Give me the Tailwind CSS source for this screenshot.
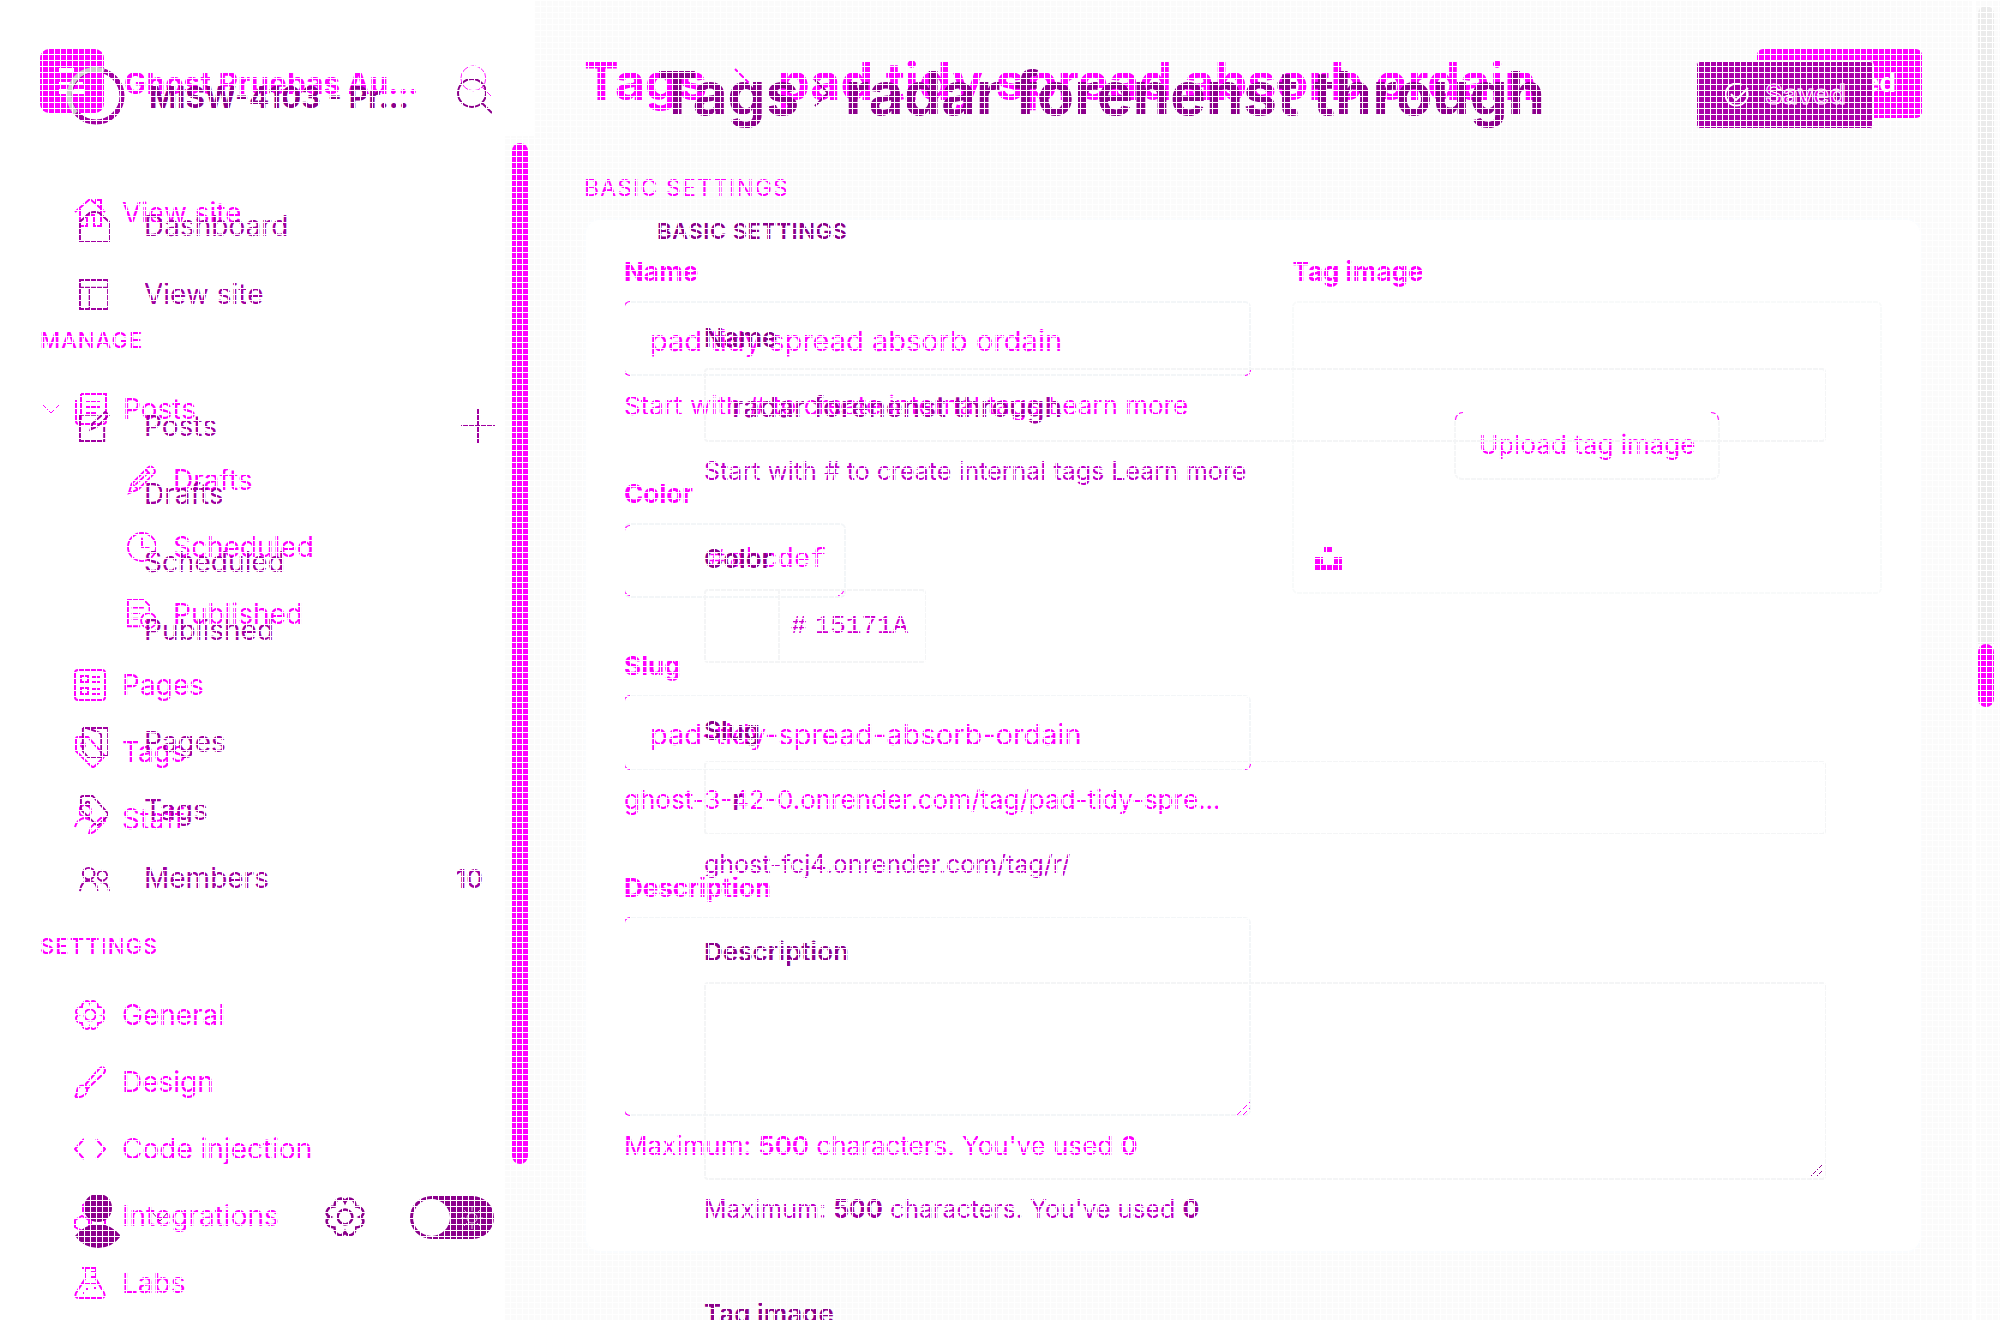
<!DOCTYPE html>
<html lang="en">
<head>
<meta charset="utf-8">
<meta name="viewport" content="width=device-width, initial-scale=1">
<title>Ghost tag editor comparison</title>
<script src="https://cdn.jsdelivr.net/npm/@tailwindcss/browser@4"></script>
</head>
<body class="bg-[#fbfbfb] font-[Inter,sans-serif]">
<svg class="hidden" aria-hidden="true">
  <symbol id="home" viewBox="0 0 32 32"><path d="M1 15 16 2l15 13M6 12v17h7V18h7v11h7V12M22 6V3h5v8"/></symbol>
  <symbol id="posts" viewBox="0 0 32 32"><path d="M6 1h25v27q0 3-3 3H4q-3 0-3-3V7M6 1v27M11 9h14M11 14h14M11 20h10"/></symbol>
  <symbol id="pencil" viewBox="0 0 32 32"><path d="M2 30l3-10L22 3q3-3 6 0t1 6L12 26zM5 20l7 6M20 5l7 7M9 21 23 8"/></symbol>
  <symbol id="clock" viewBox="0 0 32 32"><circle cx="16" cy="16" r="15"/><path d="M16 6v10h8"/></symbol>
  <symbol id="published" viewBox="0 0 32 32"><path d="M14 29H1V1h17l6 6v6M5 9h13M5 15h9M5 21h7"/><circle cx="23" cy="23" r="8"/><path d="m19 23 3 3 5-5"/></symbol>
  <symbol id="pages" viewBox="0 0 32 32"><rect x="1" y="1" width="30" height="30" rx="3"/><path d="M7 7h7v6H7zM7 19h7v6H7zM18 8h8M18 13h8M18 20h8M18 25h8"/></symbol>
  <symbol id="tag" viewBox="0 0 32 32"><path d="M2 3q0-2 2-2h10l15 17q2 2 0 4l-8 8q-2 2-4 0L2 15z"/><circle cx="9" cy="9" r="2"/></symbol>
  <symbol id="staff" viewBox="0 0 32 32"><circle cx="11" cy="8" r="6"/><path d="M1 24q2-8 10-9l6 2M15 31l2-7 10-9q4-1 4 3L20 29z"/></symbol>
  <symbol id="gear" viewBox="-1 -1 34 34"><circle cx="16" cy="16" r="6"/><path d="M16 4C18-1 24.500 1 24.500 7.500 31 7.500 33 14 28 16 33 18 31 24.500 24.500 24.500 24.500 31 18 33 16 28 14 33 7.500 31 7.500 24.500 1 24.500-1 18 4 16-1 14 1 7.500 7.500 7.500 7.500 1 14-1 16 4z"/></symbol>
  <symbol id="brush" viewBox="0 0 32 32"><path d="M1 31q2-2 2-6 1-6 7-5 5 3 2 7-3 5-11 4M11 19 25 3q3-3 5-1t0 5L14 22zM11 19l3 4"/></symbol>
  <symbol id="code" viewBox="0 0 32 32"><path d="M10 6 1 16l9 10M22 6l9 10-9 10"/></symbol>
  <symbol id="plug" viewBox="0 0 32 32"><path d="M9 12V5l7-4 7 4v7l-7 4zM1 27v-7l7-4 7 4v7l-7 4zM17 27v-7l7-4 7 4v7l-7 4z"/></symbol>
  <symbol id="flask" viewBox="0 0 32 32"><path d="M8 1h14M11 1v11L2 26q-2 5 3 5h22q5 0 3-5l-8-14V1M17 5h5M17 10h5M7 17h18"/><path d="M12 22h2M20 21h3M9 26h1"/></symbol>
  <symbol id="search" viewBox="0 0 36 36"><circle cx="15" cy="15" r="14"/><path d="m25 25 10 10"/></symbol>
  <symbol id="house" viewBox="0 0 32 32"><path d="M1 31V11L11 2q5-2 10 0l10 9v20z"/></symbol>
  <symbol id="layout" viewBox="0 0 32 32"><path d="M1 1h29v30H1zM1 9h29M11 9v22"/></symbol>
  <symbol id="compose" viewBox="0 0 32 32"><path d="M20 4H1v27h25V16M12 19l2-6L27 1l4 3-12 12z"/></symbol>
  <symbol id="sheets" viewBox="0 0 32 32"><path d="M4 1h26v29h-6M4 1v24l5 6h14V9q0-3-4-4L8 1"/></symbol>
  <symbol id="members" viewBox="0 0 32 32"><circle cx="10" cy="11" r="6"/><circle cx="24" cy="13" r="5"/><path d="M1 29q1-10 9-11 9 1 9 11M22 20q8-1 9 9"/></symbol>
  <symbol id="grip" viewBox="0 0 16 16"><path d="M2 15 15 2M8 15l7-7"/></symbol>
</svg>

<div class="grid h-screen grid-cols-1 grid-rows-1 overflow-hidden">

  <!-- First version -->
  <div class="col-start-1 row-start-1 flex min-h-0 text-[#ff00ff]">
    <aside class="flex w-[535px] shrink-0 bg-white">
      <div class="min-w-0 flex-1 pl-10 pt-[49px]">
        <div class="flex h-16 items-center">
          <svg class="size-16 shrink-0" viewBox="0 0 64 64"><rect width="64" height="64" rx="9" fill="#ff00ff"/><path d="M19 19h15v5H19zM19 33h24v2H19zM19 40h9v5h-9zM33 40h11v5H33z" fill="#fff"/></svg>
          <h2 class="ml-5 w-[312px] whitespace-nowrap pt-1 text-[30px] font-bold">Ghost Pruebas Au...</h2>
          <button aria-label="Search" class="ml-6"><svg class="size-8 fill-none stroke-current"><use href="#search"/></svg></button>
        </div>
        <nav class="mt-[66px] text-[28px]">
          <a href="#" class="flex h-[67px] items-center pl-[34px]"><svg class="mr-4 size-8 fill-none stroke-current stroke-2"><use href="#home"/></svg>View site</a>
          <h3 class="mb-[21px] mt-20 h-7 text-[22px] leading-7 font-medium tracking-wider">MANAGE</h3>
          <a href="#" class="flex h-[67px] items-center"><svg class="ml-[3px] mr-4 h-3 w-4 fill-none stroke-current" viewBox="0 0 16 12"><path d="m0 2 8 8 8-8"/></svg><svg class="mr-4 size-8 fill-none stroke-current stroke-2"><use href="#posts"/></svg>Posts</a>
          <div class="my-1">
            <a href="#" class="flex h-[67px] items-center pl-[87px]"><svg class="mr-4 size-[30px] fill-none stroke-current stroke-2"><use href="#pencil"/></svg>Drafts</a>
            <a href="#" class="flex h-[67px] items-center pl-[87px]"><svg class="mr-4 size-[30px] fill-none stroke-current stroke-2"><use href="#clock"/></svg>Scheduled</a>
            <a href="#" class="flex h-[67px] items-center pl-[87px]"><svg class="mr-4 size-[30px] fill-none stroke-current stroke-2"><use href="#published"/></svg>Published</a>
          </div>
          <a href="#" class="flex h-[67px] items-center pl-[34px]"><svg class="mr-4 size-8 fill-none stroke-current stroke-2"><use href="#pages"/></svg>Pages</a>
          <a href="#" class="flex h-[67px] items-center pl-[34px]"><svg class="mr-4 size-8 fill-none stroke-current stroke-2"><use href="#tag"/></svg>Tags</a>
          <a href="#" class="flex h-[67px] items-center pl-[34px]"><svg class="mr-4 size-8 fill-none stroke-current stroke-2"><use href="#staff"/></svg>Staff</a>
          <h3 class="mb-[21px] mt-20 h-7 text-[22px] leading-7 font-medium tracking-wider">SETTINGS</h3>
          <a href="#" class="flex h-[67px] items-center pl-[34px]"><svg class="mr-4 size-8 fill-none stroke-current stroke-2"><use href="#gear"/></svg>General</a>
          <a href="#" class="flex h-[67px] items-center pl-[34px]"><svg class="mr-4 size-8 fill-none stroke-current stroke-2"><use href="#brush"/></svg>Design</a>
          <a href="#" class="flex h-[67px] items-center pl-[34px]"><svg class="mr-4 size-8 fill-none stroke-current stroke-2"><use href="#code"/></svg>Code injection</a>
          <a href="#" class="flex h-[67px] items-center pl-[34px]"><svg class="mr-4 size-8 fill-none stroke-current stroke-2"><use href="#plug"/></svg>Integrations</a>
          <a href="#" class="flex h-[67px] items-center pl-[34px]"><svg class="mr-4 size-8 fill-none stroke-current stroke-2"><use href="#flask"/></svg>Labs</a>
        </nav>
      </div>
      <div class="mt-[136px] w-[30px] bg-[#fbfbfb] px-[7px] pt-[7px]"><div class="h-[1021px] rounded-full bg-[#ff00ff]"></div></div>
    </aside>

    <main class="min-w-0 flex-1 pl-[49px] pr-[50px] pt-[49px]">
      <header class="flex h-[69px] items-start justify-between">
        <h1 class="flex items-center whitespace-nowrap text-[52px] leading-[66px] font-bold">Tags<svg class="mx-[27px] h-7 w-4 fill-none stroke-current stroke-2" viewBox="0 0 16 28"><path d="m1 1 13 13L1 27"/></svg>pad tidy spread absorb ordain</h1>
        <button class="h-[69px] w-[165px] rounded-md bg-[#ff00ff] pr-[26px] text-right text-[27px] font-semibold text-white">Saved</button>
      </header>
      <h4 class="mb-4 mt-14 h-7 text-[23px] leading-7 tracking-wider">BASIC SETTINGS</h4>
      <section class="grid grid-cols-[628fr_590fr] gap-[41px] rounded-2xl border-2 border-[#fafcfe] bg-white px-[38px] pb-[89px] pt-9">
        <div>
          <label for="a-name" class="mb-[13px] block h-8 text-[26px] leading-8 font-bold">Name</label>
          <div class="relative">
            <input id="a-name" value="pad tidy spread absorb ordain" class="block h-[75px] w-full rounded-md border-2 border-l-0 border-[#f3f6f8] px-[26px] pt-[3px] text-[29px]">
            <span class="absolute left-0 top-0 size-1.5 rounded-tl-md border-l border-t"></span><span class="absolute bottom-0 left-0 size-1.5 rounded-bl-md border-b border-l"></span><span class="absolute bottom-0 right-0 size-1.5 rounded-br-md border-b border-r"></span>
          </div>
          <p class="mt-3.5 h-8 whitespace-nowrap text-[26px] leading-8">Start with # to create internal tags <a href="#">Learn more</a></p>

          <label for="a-color" class="mb-[13px] mt-14 block h-8 text-[26px] leading-8 font-bold">Color</label>
          <div class="relative flex h-[75px] w-[222px] items-center rounded-md border-2 border-l-0 border-[#f3f6f8] font-['Liberation_Mono',monospace] text-[27px]">
            <div class="h-full w-[73px] border-r border-[#f3f6f8]"></div>
            <span class="ml-3">#</span><input id="a-color" value="abcdef" class="ml-1 w-[106px]">
            <span class="absolute left-0 top-0 size-1.5 rounded-tl-md border-l border-t"></span><span class="absolute bottom-0 left-0 size-1.5 rounded-bl-md border-b border-l"></span><span class="absolute bottom-0 right-0 size-1.5 rounded-br-md border-b border-r"></span>
          </div>

          <label for="a-slug" class="mb-[13px] mt-[52px] block h-8 text-[26px] leading-8 font-bold">Slug</label>
          <div class="relative">
            <input id="a-slug" value="pad-tidy-spread-absorb-ordain" class="block h-[75px] w-full rounded-md border-2 border-l-0 border-[#f3f6f8] px-[26px] pt-[3px] text-[29px]">
            <span class="absolute left-0 top-0 size-1.5 rounded-tl-md border-l border-t"></span><span class="absolute bottom-0 left-0 size-1.5 rounded-bl-md border-b border-l"></span><span class="absolute bottom-0 right-0 size-1.5 rounded-br-md border-b border-r"></span>
          </div>
          <p class="mt-3.5 h-8 whitespace-nowrap text-[26px] leading-8">ghost-3-42-0.onrender.com/tag/pad-tidy-spre...</p>

          <label for="a-desc" class="mb-[13px] mt-14 block h-8 text-[26px] leading-8 font-bold">Description</label>
          <div class="relative">
            <textarea id="a-desc" class="block h-[199px] w-full resize-none rounded-md border-2 border-l-0 border-[#f3f6f8] p-6 text-[29px]"></textarea>
            <span class="absolute left-0 top-0 size-1.5 rounded-tl-md border-l border-t"></span><span class="absolute bottom-0 left-0 size-1.5 rounded-bl-md border-b border-l"></span>
            <svg class="absolute bottom-0 right-0 size-4 fill-none stroke-current"><use href="#grip"/></svg>
          </div>
          <p class="mt-3.5 h-8 whitespace-nowrap text-[26px] leading-8">Maximum: <b class="font-semibold">500</b> characters. You've used <b class="font-semibold">0</b></p>
        </div>
        <div>
          <h5 class="mb-[13px] h-8 text-[26px] leading-8 font-bold">Tag image</h5>
          <div class="relative flex h-[293px] items-center justify-center rounded-md border-2 border-[#f8fafa] pb-1">
            <button class="relative h-[68px] w-[266px] rounded-lg border-2 border-t-0 border-[#f5f6f7] text-[26px]">Upload tag image
              <span class="absolute -left-px top-0 size-2 rounded-tl-lg border-l border-t"></span><span class="absolute -right-px top-0 size-2 rounded-tr-lg border-r border-t"></span></button>
            <svg class="absolute bottom-5 left-[21px] size-[27px]" viewBox="0 0 27 27" aria-label="Unsplash"><path d="M9 1h9v6H9zM0 12h8v7h11v-7h8v14H0z" fill="#ff00ff"/></svg>
          </div>
        </div>
      </section>
    </main>

    <div class="flex w-7 shrink-0 flex-col border-l-4 border-white pl-0.5 pr-1.5 pt-1.5"><div class="h-[638px] rounded-t-full bg-[#ebebeb]"></div><div class="h-[63px] rounded-full bg-[#ff00ff]"></div></div>
  </div>

  <!-- Second version -->
  <div class="z-10 col-start-1 row-start-1 flex min-h-0 text-[#8b008b]">
    <aside class="flex w-[535px] shrink-0 flex-col pt-[67px]">
      <div class="flex h-[58px] items-center pl-[67px]">
        <svg class="size-[58px] shrink-0 fill-none stroke-[5]" viewBox="0 0 58 58"><circle cx="29" cy="29" r="26" stroke="#a000a0"/><path d="M37 4A26 26 0 0 0 9 46" stroke="#cccccc"/></svg>
        <h2 class="ml-6 w-[284px] whitespace-nowrap pt-0.5 text-[30px] font-bold">MISW-4103 - Pr...</h2>
        <button aria-label="Search members" class="ml-6"><svg class="size-9 fill-none stroke-current stroke-2"><use href="#search"/></svg></button>
      </div>
      <nav class="mt-[67px] text-[28px] text-[#a000a0]">
        <a href="#" class="flex h-[68px] items-center pl-[79px]"><svg class="mr-[34px] size-[31px] fill-none stroke-current stroke-2"><use href="#house"/></svg>Dashboard</a>
        <a href="#" class="flex h-[68px] items-center pl-[79px]"><svg class="mr-[34px] size-[31px] fill-none stroke-current stroke-2"><use href="#layout"/></svg>View site</a>
        <div class="mt-16 flex h-[68px] items-center pl-[79px]"><a href="#" class="flex w-[382px] items-center"><svg class="mr-[34px] size-[31px] fill-none stroke-current stroke-2"><use href="#compose"/></svg>Posts</a><button aria-label="New post"><svg class="size-[34px] stroke-current stroke-2" viewBox="0 0 34 34"><path d="M0 17h34M17 0v34"/></svg></button></div>
        <a href="#" class="flex h-[68px] items-center pl-36">Drafts</a>
        <a href="#" class="flex h-[68px] items-center pl-36">Scheduled</a>
        <a href="#" class="flex h-[68px] items-center pl-36">Published</a>
        <a href="#" class="mt-11 flex h-[68px] items-center pl-[79px]"><svg class="mr-[34px] size-[31px] fill-none stroke-current stroke-2"><use href="#sheets"/></svg>Pages</a>
        <a href="#" class="flex h-[68px] items-center pl-[79px]"><svg class="mr-[34px] size-[31px] fill-none stroke-current stroke-2"><use href="#tag"/></svg>Tags</a>
        <a href="#" class="flex h-[68px] items-center pl-[79px] pr-[52px]"><svg class="mr-[34px] size-[31px] fill-none stroke-current stroke-2"><use href="#members"/></svg>Members<span class="ml-auto text-[26px] font-medium">10</span></a>
      </nav>
      <div class="mb-[75px] mt-auto flex h-14 items-center pl-[74px]">
        <button aria-label="Account" class="flex items-center"><svg class="mt-2 h-14 w-12" viewBox="0 0 48 56"><path d="M24 1c9 0 14 6 14 14s-6 14-14 14-14-6-14-14S15 1 24 1zM1 43q10-12 23-12t23 12q-9 12-23 12T1 43z" fill="currentColor"/></svg><svg class="ml-[29px] h-3 w-[19px] fill-none stroke-current" viewBox="0 0 19 12"><path d="m1 1 8 9 8-9"/></svg></button>
        <button aria-label="Settings" class="ml-[154px]"><svg class="size-[42px] fill-none stroke-current stroke-2"><use href="#gear"/></svg></button>
        <label class="relative ml-11 block h-[43px] w-[84px] rounded-full bg-[#8b008b]"><input type="checkbox" aria-label="Dark mode" class="absolute inset-0 size-full opacity-0"><span class="absolute left-[3px] top-[3px] size-[37px] rounded-full bg-white"></span><svg class="absolute right-2.5 top-2.5 size-6 fill-none stroke-[#e0c0e0]" viewBox="0 0 24 24"><circle cx="12" cy="12" r="5"/><path d="M12 1v4M12 19v4M1 12h4M19 12h4M4 4l3 3M17 17l3 3M20 4l-3 3M7 17l-3 3"/></svg></label>
      </div>
    </aside>

    <main class="min-w-0 flex-1 pl-[122px] pr-[126px] pt-[61px]">
      <header class="flex h-[68px] items-start justify-between">
        <h1 class="flex items-center whitespace-nowrap text-[60px] leading-[64px] font-bold">Tags<svg class="mx-[15px] h-7 w-4 fill-none stroke-current stroke-2" viewBox="0 0 16 28"><path d="m1 1 13 13L1 27"/></svg>radar forenenst through</h1>
        <button class="flex h-[68px] w-[178px] items-center rounded-[4px] border border-white bg-[#a900a9] pl-7 text-[27px] font-semibold text-[#e000e0] [-webkit-text-stroke:1px_white]"><svg class="mr-4 size-6 fill-none stroke-white stroke-2" viewBox="0 0 24 24"><path d="M22 8a11 11 0 1 1-5-6M6 11l5 6L23 5"/></svg>Saved</button>
      </header>
      <h4 class="mt-[88px] h-7 text-[22px] leading-7 font-semibold tracking-wide">BASIC SETTINGS</h4>
      <section class="pl-[47px] pr-12 pt-[77px]">
        <label for="b-name" class="mb-3.5 block h-8 text-[26px] leading-8 font-semibold">Name</label>
        <input id="b-name" value="radar forenenst through" class="block h-[74px] w-full rounded-[4px] border-2 border-[#f4f5f6] px-[26px] pt-[3px] text-[29px] font-medium text-[#a000a0]">
        <p class="mt-[13px] h-8 whitespace-nowrap text-[25px] leading-8 text-[#bf00c8]">Start with # to create internal tags <a href="#">Learn more</a></p>

        <label for="b-color" class="mb-3.5 mt-14 block h-8 text-[26px] leading-8 font-semibold">Color</label>
        <div class="flex h-[74px] w-[222px] items-center rounded-[4px] border-2 border-[#f4f5f6] font-['Liberation_Mono',monospace] text-[26px] text-[#d000d0]">
          <div class="h-full w-[74px] border-r-2 border-[#f4f5f6]"></div>
          <span class="ml-[11px]">#</span><input id="b-color" value="15171A" class="ml-2 w-[106px]">
        </div>

        <label for="b-slug" class="mb-3.5 mt-[52px] block h-8 text-[26px] leading-8 font-semibold">Slug</label>
        <input id="b-slug" value="r" class="block h-[74px] w-full rounded-[4px] border-2 border-[#f4f5f6] px-[26px] pt-[3px] text-[29px] font-medium text-[#a000a0]">
        <p class="mt-[13px] h-8 whitespace-nowrap text-[25px] leading-8 text-[#bf00c8]">ghost-fcj4.onrender.com/tag/r/</p>

        <label for="b-desc" class="mb-3.5 mt-14 block h-8 text-[26px] leading-8 font-semibold">Description</label>
        <div class="relative">
          <textarea id="b-desc" class="block h-[198px] w-full resize-none rounded-[4px] border-2 border-[#f4f5f6] p-6 text-[29px]"></textarea>
          <svg class="absolute bottom-0.5 right-0.5 size-4 fill-none stroke-current"><use href="#grip"/></svg>
        </div>
        <p class="mt-[13px] h-8 whitespace-nowrap text-[25px] leading-8 text-[#bf00c8]">Maximum: <b class="font-bold text-[#a000a0]">500</b> characters. You've used <b class="font-bold text-[#a000a0]">0</b></p>
        <h5 class="mt-[73px] h-8 text-[26px] leading-8 font-semibold">Tag image</h5>
      </section>
    </main>
  </div>
</div>

<!-- Mesh drawn over both versions -->
<div class="pointer-events-none fixed inset-0 z-20 bg-[linear-gradient(white_1px,transparent_1px),linear-gradient(90deg,white_1px,transparent_1px)] bg-[size:6px_6px]"></div>
</body>
</html>
